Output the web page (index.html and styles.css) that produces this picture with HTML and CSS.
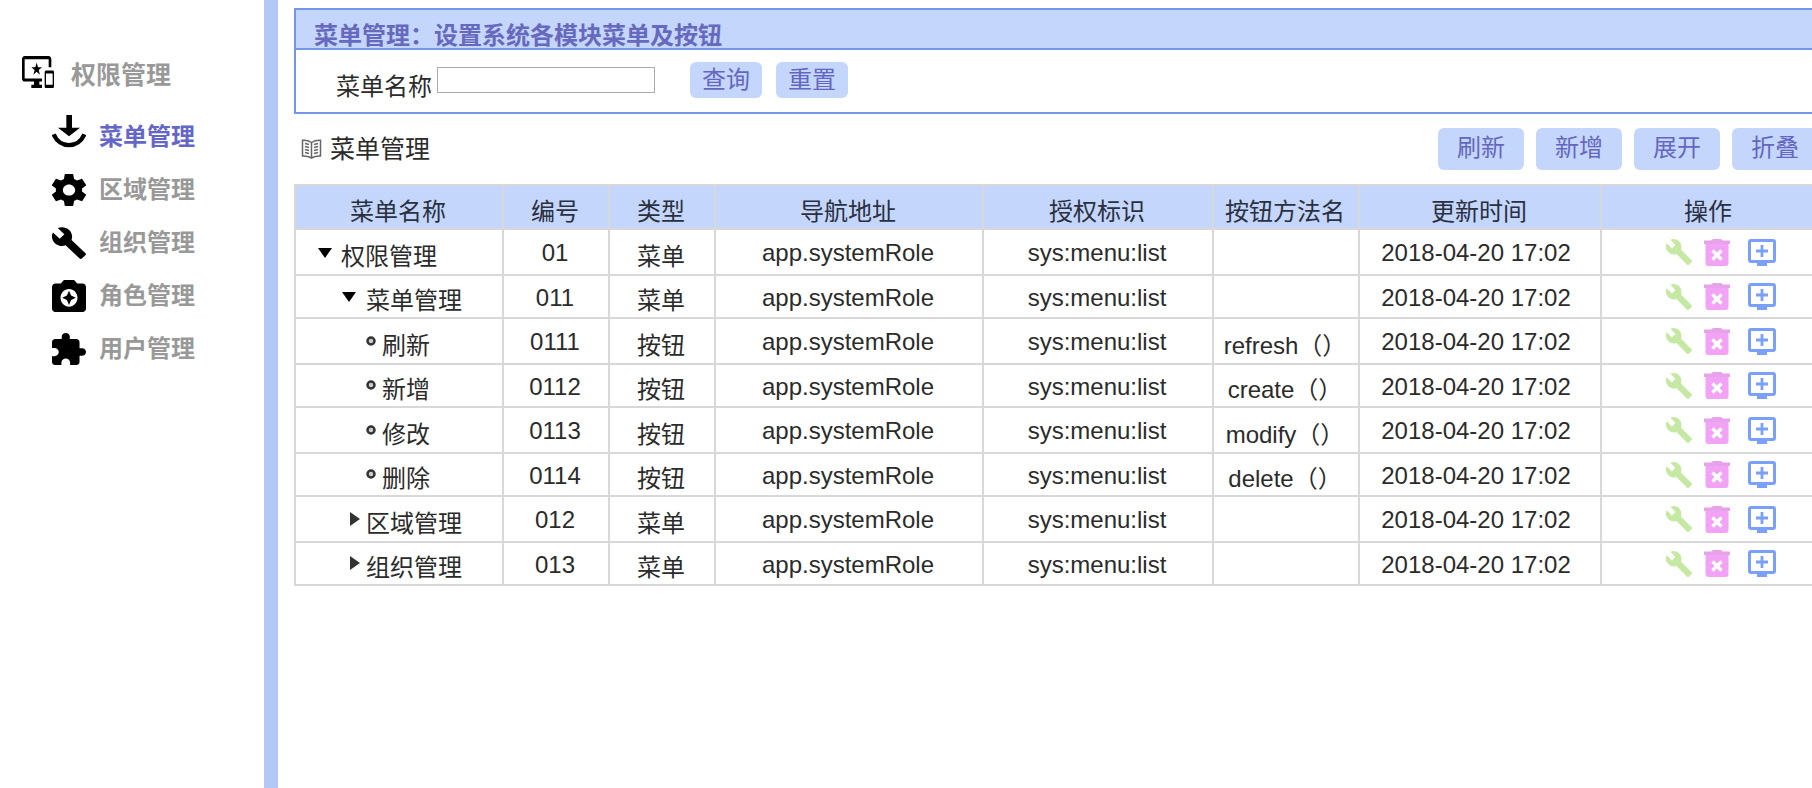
FILE: index.html
```html
<!DOCTYPE html>
<html lang="zh-CN">
<head>
<meta charset="utf-8">
<title>菜单管理</title>
<link rel="stylesheet" href="styles.css">
</head>
<body>
<svg class="defs" aria-hidden="true">
  <symbol id="wrench" viewBox="1 1 22 22" preserveAspectRatio="none"><path d="M22.7 19l-9.1-9.1c.9-2.3.4-5-1.5-6.9-2-2-5-2.4-7.4-1.3L9 6 6 9 1.6 4.7C.4 7.1.9 10.1 2.9 12.1c1.9 1.9 4.6 2.4 6.9 1.5l9.1 9.1c.4.4 1 .4 1.4 0l2.3-2.3c.5-.4.5-1.1.1-1.4z"/></symbol>
  <symbol id="trash" viewBox="0 0 26 27"><path fill="#e6a3ea" d="M0 1.500h7L9 0h8l2 1.500h7V5H0z"/><path d="M1.500 5h23v19q0 3-3 3h-17q-3 0-3-3z"/><path stroke="#fff" stroke-width="3.4" d="M8.500 11.500l9 9m0-9l-9 9"/></symbol>
  <symbol id="monitor" viewBox="0 0 28 27"><path fill-rule="evenodd" d="M3 0h22q3 0 3 3v18q0 3-3 3h-6v3H9v-3H3q-3 0-3-3V3q0-3 3-3zm0 3v18h22V3z"/><path d="M12.600 6h2.800v4.600H20v2.800h-4.600V18h-2.800v-4.600H8v-2.800h4.600z"/></symbol>
  <symbol id="down" viewBox="0 0 14 18"><path d="M0 0h14L7 10z"/></symbol>
  <symbol id="right" viewBox="0 0 10 24"><path d="M0 0l10 7-10 7z"/></symbol>
  <symbol id="dot" viewBox="0 0 10 20"><circle cx="5" cy="5" r="3.500" fill="#ccc" stroke="#333" stroke-width="2.500"/></symbol>
</svg>
<div class="app">
  <nav class="sidebar">
    <a class="nav-root" href="#"><svg class="nav-root-icon" viewBox="0 2 24 20" preserveAspectRatio="none"><path d="M23 11.010L18 11c-.55 0-1 .45-1 1v9c0 .55.45 1 1 1h5c.55 0 1-.45 1-1v-9c0-.55-.45-.99-1-.99zM23 20h-5v-7h5v7zM20 2H2C.89 2 0 2.890 0 4v12c0 1.100.89 2 2 2h7v2H7v2h8v-2h-2v-2h2v-2H2V4h18v5h2V4c0-1.110-.9-2-2-2zm-8.030 7L11 6l-.97 3H7l2.470 1.760-.94 2.910 2.470-1.800 2.470 1.800-.94-2.910L15 9h-3.030z"/></svg><span class="nav-root-text">权限管理</span></a>
    <a class="nav-item nav-item-active" href="#"><svg class="nav-icon nav-icon-tall" viewBox="0 0 102 132"><path d="M43 0h17v38h24L51 64 18 38h25z"/><path fill="none" stroke="#000" stroke-width="13" d="M5 58C23 101 79 101 97 58"/></svg>菜单管理</a>
    <a class="nav-item" href="#"><svg class="nav-icon" viewBox="2.300 2 19.400 20" preserveAspectRatio="none"><path d="M19.430 12.980c.04-.32.07-.64.07-.98s-.03-.66-.07-.98l2.110-1.650c.19-.15.24-.42.12-.64l-2-3.460c-.12-.22-.39-.3-.61-.22l-2.490 1c-.52-.4-1.080-.73-1.690-.98l-.38-2.650C14.460 2.180 14.250 2 14 2h-4c-.25 0-.46.18-.49.42l-.38 2.650c-.61.25-1.170.59-1.690.98l-2.490-1c-.23-.09-.49 0-.61.22l-2 3.460c-.13.22-.07.49.12.64l2.110 1.650c-.04.32-.07.65-.07.98s.03.66.07.98l-2.110 1.650c-.19.15-.24.42-.12.64l2 3.460c.12.22.39.3.61.22l2.490-1c.52.4 1.080.73 1.690.98l.38 2.650c.03.24.24.42.49.42h4c.25 0 .46-.18.49-.42l.38-2.650c.61-.25 1.170-.59 1.690-.98l2.490 1c.23.09.49 0 .61-.22l2-3.460c.12-.22.07-.49-.12-.64l-2.110-1.650zM12 15.500c-1.930 0-3.500-1.570-3.500-3.500s1.570-3.500 3.500-3.500 3.500 1.570 3.500 3.500-1.570 3.500-3.500 3.500z"/></svg>区域管理</a>
    <a class="nav-item" href="#"><svg class="nav-icon"><use href="#wrench"/></svg>组织管理</a>
    <a class="nav-item" href="#"><svg class="nav-icon" viewBox="2 3 20 18" preserveAspectRatio="none"><path d="M9 3L7.170 5H4c-1.100 0-2 .9-2 2v12c0 1.100.9 2 2 2h16c1.100 0 2-.9 2-2V7c0-1.100-.9-2-2-2h-3.170L15 3H9zm3 15c-2.760 0-5-2.240-5-5s2.240-5 5-5 5 2.240 5 5-2.240 5-5 5zm0-1l1.250-2.750L16 13l-2.750-1.250L12 9l-1.250 2.750L8 13l2.750 1.250z"/></svg>角色管理</a>
    <a class="nav-item" href="#"><svg class="nav-icon" viewBox="2 1 21 21" preserveAspectRatio="none"><path d="M20.500 11H19V7c0-1.100-.9-2-2-2h-4V3.500C13 2.120 11.880 1 10.500 1S8 2.120 8 3.500V5H4c-1.100 0-1.990.9-1.990 2v3.800H3.500c1.490 0 2.700 1.210 2.700 2.700s-1.210 2.700-2.700 2.700H2V20c0 1.100.9 2 2 2h3.800v-1.500c0-1.490 1.210-2.700 2.700-2.700 1.490 0 2.700 1.210 2.700 2.700V22H17c1.100 0 2-.9 2-2v-4h1.500c1.380 0 2.500-1.120 2.500-2.500S21.880 11 20.500 11z"/></svg>用户管理</a>
  </nav>
  <main class="content">
    <section class="panel">
      <h1 class="panel-title">菜单管理：设置系统各模块菜单及按钮</h1>
      <form class="search">
        <label class="search-label" for="menu-name">菜单名称</label>
        <input class="search-input" id="menu-name" type="text">
        <button class="btn btn-small" type="button">查询</button>
        <button class="btn btn-small" type="button">重置</button>
      </form>
    </section>
    <div class="toolbar">
      <svg class="book" viewBox="0 0 20 20"><path d="M10 3.500Q6 .8 1 1.200V17q5-.3 9 2 4-2.300 9-2V1.200q-5-.4-9 2.300zV19M3.500 4.500l4 1M3.500 7.500l4 1M3.500 10.500l4 1M3.500 13.500l4 1m9-10l-4 1m4 2l-4 1m4 2l-4 1m4 2l-4 1"/></svg>
      <h2 class="toolbar-title">菜单管理</h2>
      <div class="actions">
        <button class="btn" type="button">刷新</button>
        <button class="btn" type="button">新增</button>
        <button class="btn" type="button">展开</button>
        <button class="btn" type="button">折叠</button>
      </div>
    </div>
    <table class="grid">
      <colgroup><col class="c-name"><col class="c-code"><col class="c-code"><col class="c-url"><col class="c-perm"><col class="c-method"><col class="c-time"><col class="c-ops"></colgroup>
      <thead><tr><th>菜单名称</th><th>编号</th><th>类型</th><th>导航地址</th><th>授权标识</th><th>按钮方法名</th><th>更新时间</th><th>操作</th></tr></thead>
      <tbody id="rows"></tbody>
    </table>
  </main>
</div>
<script src="rows.js"></script>
</body>
</html>
```
FILE: styles.css
```css
* { box-sizing: border-box; }
body {
  margin: 0;
  overflow: hidden;
  background: #fff;
  color: #2b2b2b;
  font-family: "Liberation Sans", "Noto Sans CJK SC", sans-serif;
  font-size: 24px;
  line-height: 24px;
}
button, input { font: inherit; }
.defs { position: absolute; width: 0; height: 0; }
.app { display: flex; min-height: 100vh; }

.sidebar {
  flex: none;
  width: 278px;
  padding-top: 56px;
  border-right: 14px solid #b4c8f5;
}
.nav-root, .nav-item {
  display: flex;
  align-items: center;
  color: #999;
  font-weight: bold;
  text-decoration: none;
}
.nav-root {
  gap: 17px;
  height: 32px;
  margin-bottom: 22px;
  padding-left: 22px;
  font-size: 25px;
}
.nav-root-text { padding-top: 6px; }
.nav-item {
  gap: 13px;
  height: 53px;
  padding-left: 52px;
}
.nav-item-active { color: #6466c8; }
.nav-root-icon { width: 32px; height: 32px; }
.nav-icon { width: 34px; height: 32px; }
.nav-icon-tall { height: 44px; }

.content { flex: 1; min-width: 0; padding: 8px 0 0 16px; }
.panel { border: 2px solid #7495e8; border-right: 0; }
.panel-title {
  margin: 0;
  padding: 14px 18px 0;
  border-bottom: 2px solid #7495e8;
  background: #c5d6fc;
  color: #6669bd;
  font-size: 24px;
  line-height: 24px;
}
.search {
  display: flex;
  align-items: flex-start;
  height: 62px;
  padding: 12px 0 0 40px;
}
.search-label { padding-top: 13px; }
.search-input {
  width: 218px;
  height: 26px;
  margin: 5px 35px 0 5px;
  padding: 0 4px;
  border: 1px solid #aaa;
  background: #fff;
}
.btn {
  width: 86px;
  height: 42px;
  padding: 0 0 2px;
  border: 0;
  border-radius: 6px;
  background: #c5d6fc;
  color: #6467c0;
}
.btn-small { width: 72px; height: 36px; margin-right: 14px; padding: 0; }

.toolbar {
  display: flex;
  align-items: center;
  height: 70px;
  padding-left: 7px;
}
.book { width: 21px; height: 20px; fill: none; stroke: #666; stroke-width: 1.500; }
.toolbar-title { margin: 0 0 0 8px; font-size: 25px; font-weight: normal; }
.actions { display: flex; gap: 12px; margin: 0 -6px 0 auto; }

.grid {
  width: calc(100% + 6px);
  border-collapse: collapse;
  table-layout: fixed;
}
.c-name { width: 208px; }
.c-code { width: 106px; }
.c-url { width: 268px; }
.c-perm { width: 230px; }
.c-method { width: 146px; }
.c-time { width: 242px; }
.grid th, .grid td {
  padding: 0 2px 0 0;
  border: 2px solid #d8d8d8;
  text-align: center;
  font-weight: normal;
}
.grid th { height: 44px; padding-top: 10px; background: #c5d6fc; color: #2a3040; }
.grid td { height: 43px; padding-top: 2px; }
.grid tbody tr:nth-child(odd) td { height: 46px; }
.grid .low { padding-top: 9px; }
.grid .time { padding-right: 8px; }
.grid .ops-cell { padding: 0; }

.tree { display: flex; align-items: center; gap: 9px; }
.level-1 { padding-left: 22px; }
.level-2 { padding-left: 46px; gap: 10px; }
.level-3 { padding-left: 70px; gap: 6px; }
.level-closed { padding-left: 54px; gap: 6px; }
.mark-down { width: 14px; height: 18px; fill: #000; }
.mark-right { width: 10px; height: 24px; fill: #333; }
.mark-dot { width: 10px; height: 20px; }

.ops { display: flex; align-items: center; justify-content: center; gap: 12px; padding-left: 24px; }
.op { display: flex; padding: 0; border: 0; background: none; }
.op-edit { width: 26px; height: 26px; fill: #c5e8a3; }
.op-delete { width: 26px; height: 27px; fill: #f2a3f6; }
.op-add { width: 28px; height: 27px; margin-left: 6px; fill: #7aa0fa; }
```
FILE: rows.js
```js
const rows = [
  ["权限管理", "01", "菜单", "", "level-1", "down"],
  ["菜单管理", "011", "菜单", "", "level-2", "down"],
  ["刷新", "0111", "按钮", "refresh（）", "level-3", "dot"],
  ["新增", "0112", "按钮", "create（）", "level-3", "dot"],
  ["修改", "0113", "按钮", "modify（）", "level-3", "dot"],
  ["删除", "0114", "按钮", "delete（）", "level-3", "dot"],
  ["区域管理", "012", "菜单", "", "level-closed", "right"],
  ["组织管理", "013", "菜单", "", "level-closed", "right"]
];
document.getElementById("rows").innerHTML = rows.map(([name, code, type, method, level, mark]) => `
  <tr>
    <td class="low"><div class="tree ${level}"><svg class="mark-${mark}"><use href="#${mark}"/></svg>${name}</div></td>
    <td>${code}</td>
    <td class="low">${type}</td>
    <td>app.systemRole</td>
    <td>sys:menu:list</td>
    <td class="low">${method}</td>
    <td class="time">2018-04-20 17:02</td>
    <td class="ops-cell"><div class="ops">
      <button class="op" type="button" aria-label="修改"><svg class="op-edit"><use href="#wrench"/></svg></button>
      <button class="op" type="button" aria-label="删除"><svg class="op-delete"><use href="#trash"/></svg></button>
      <button class="op" type="button" aria-label="新增"><svg class="op-add"><use href="#monitor"/></svg></button>
    </div></td>
  </tr>`).join("");
```
